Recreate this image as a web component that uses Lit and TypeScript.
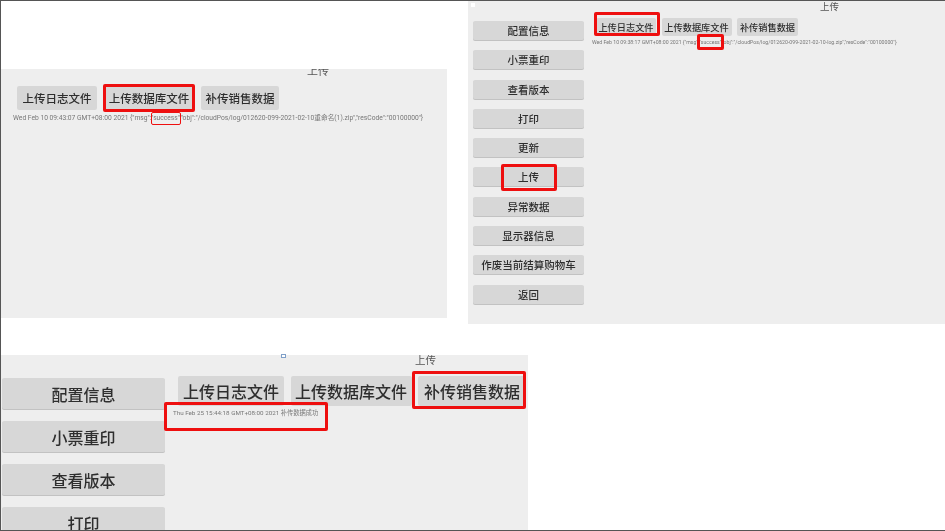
import { LitElement, html, css } from "lit";
import { customElement } from "lit/decorators.js";

const SIDE = ["配置信息", "小票重印", "查看版本", "打印", "更新", "上传", "异常数据", "显示器信息", "作废当前结算购物车", "返回"];
const TOP = ["上传日志文件", "上传数据库文件", "补传销售数据"];

@customElement("app-root")
export class AppRoot extends LitElement {
  static styles = css`
    :host { display: block; width: 945px; height: 531px; overflow: hidden; }
    * { box-sizing: border-box; }
    .slide {
      position: relative; width: 945px; height: 531px; background: #fff; overflow: hidden;
      font-family: "Roboto", "Noto Sans CJK SC", sans-serif;
    }
    .frame { position: absolute; inset: 0; border: solid #555; border-width: 1px 0 1px 1px; pointer-events: none; }
    .panel { position: absolute; background: #eee; overflow: hidden; filter: blur(0.35px); }
    .title { color: #555; line-height: 1; white-space: nowrap; }
    .body { display: flex; align-items: flex-start; }
    .side { display: flex; flex-direction: column; flex: none; }
    .main { display: flex; flex-direction: column; }
    .tops { display: flex; }
    .btn {
      display: flex; align-items: center; justify-content: center; flex: none;
      background: #d7d7d7; color: #2e2e2e; border-radius: 2px; white-space: nowrap; font-weight: 500;
      box-shadow: 0 1px 0 #c2c2c2;
    }
    .tops .btn { box-shadow: none; }
    .msg { color: #777; white-space: nowrap; line-height: 1; }

    .p1 { left: 1px; top: 69px; width: 446px; height: 249px; }
    .p1 .title { font-size: 11px; padding-left: 306px; margin-top: -3px; height: 12px; }
    .p1 .main { padding: 8px 0 0 12px; }
    .p1 .tops { gap: 8px; padding-left: 4px; }
    .p1 .btn { height: 24px; font-size: 11.5px; }
    .p1 .btn:nth-child(1) { width: 80px; }
    .p1 .btn:nth-child(2) { width: 88px; }
    .p1 .btn:nth-child(3) { width: 78px; }
    .p1 .msg { font-size: 6.7px; margin-top: 5px; }

    .p2 { left: 468px; top: 1px; width: 477px; height: 323px; }
    .p2 .title { font-size: 9.5px; padding-left: 352px; padding-top: 1px; height: 13px; }
    .p2 .side { width: 111px; margin: 7px 0 0 5px; gap: 10.3px; }
    .p2 .side .btn { height: 19px; font-size: 10.5px; }
    .p2 .main { padding: 4px 0 0 8px; }
    .p2 .tops { gap: 5.5px; padding-left: 4px; }
    .p2 .tops .btn { height: 18px; font-size: 9.2px; }
    .p2 .tops .btn:nth-child(1) { width: 60px; }
    .p2 .tops .btn:nth-child(2) { width: 70px; }
    .p2 .tops .btn:nth-child(3) { width: 61px; }
    .p2 .msg { font-size: 5.2px; margin-top: 4px; }

    .p3 { left: 1px; top: 355px; width: 527px; height: 176px; }
    .p3 .title { font-size: 10.5px; padding-left: 414px; padding-top: 1px; height: 21px; }
    .p3 .side { width: 163px; margin: 2px 0 0 1px; gap: 12px; }
    .p3 .side .btn { height: 31px; font-size: 16px; }
    .p3 .main { padding: 0 0 0 13px; }
    .p3 .tops { gap: 6.5px; }
    .p3 .tops .btn { height: 30px; font-size: 16px; }
    .p3 .tops .btn:nth-child(1) { width: 106px; }
    .p3 .tops .btn:nth-child(2) { width: 121px; }
    .p3 .tops .btn:nth-child(3) { width: 108px; }
    .p3 .msg { font-size: 6.25px; margin-top: 4px; margin-left: -5px; }

    .dot { position: absolute; left: 281px; top: 354px; width: 5px; height: 4px; border: 1px solid #7f9fc8; background: #fff; }
    .tick { position: absolute; left: 471px; top: 3px; width: 4px; height: 4px; background: #fff; }

    .mark { position: absolute; border: solid #ee0f0f; border-radius: 2px; }
    .thick { border-width: 3px; }
    .thin { border-width: 1.5px; }
    .m1 { left: 103px; top: 84px; width: 92px; height: 28px; }
    .m2 { left: 151px; top: 112px; width: 30px; height: 13px; }
    .m3 { left: 594px; top: 12px; width: 66px; height: 24px; }
    .m4 { left: 697px; top: 34px; width: 27px; height: 16px; }
    .m5 { left: 501px; top: 164px; width: 56px; height: 27px; }
    .m6 { left: 412px; top: 371px; width: 114px; height: 38px; }
    .m7 { left: 164px; top: 402px; width: 164px; height: 29px; }
  `;

  private tops() {
    return html`<div class="tops">${TOP.map((t) => html`<div class="btn">${t}</div>`)}</div>`;
  }

  private side(items: string[]) {
    return html`<div class="side">${items.map((t) => html`<div class="btn">${t}</div>`)}</div>`;
  }

  render() {
    return html`
      <div class="slide">
        <section class="panel p1">
          <div class="title">上传</div>
          <div class="main">
            ${this.tops()}
            <div class="msg">Wed Feb 10 09:43:07 GMT+08:00 2021 {"msg":"success","obj":"/cloudPos/log/012620-099-2021-02-10重命名(1).zip","resCode":"00100000"}</div>
          </div>
        </section>

        <section class="panel p2">
          <div class="title">上传</div>
          <div class="body">
            ${this.side(SIDE)}
            <div class="main">
              ${this.tops()}
              <div class="msg">Wed Feb 10 09:38:17 GMT+08:00 2021 {"msg":"success","obj":"/cloudPos/log/012620-099-2021-02-10-log.zip","resCode":"00100000"}</div>
            </div>
          </div>
        </section>

        <section class="panel p3">
          <div class="title">上传</div>
          <div class="body">
            ${this.side(SIDE.slice(0, 4))}
            <div class="main">
              ${this.tops()}
              <div class="msg">Thu Feb 25 15:44:18 GMT+08:00 2021 补传数据成功</div>
            </div>
          </div>
        </section>

        <div class="dot"></div>
        <div class="tick"></div>
        <div class="mark thick m1"></div>
        <div class="mark thin m2"></div>
        <div class="mark thick m3"></div>
        <div class="mark thick m4"></div>
        <div class="mark thick m5"></div>
        <div class="mark thick m6"></div>
        <div class="mark thick m7"></div>
        <div class="frame"></div>
      </div>
    `;
  }
}
